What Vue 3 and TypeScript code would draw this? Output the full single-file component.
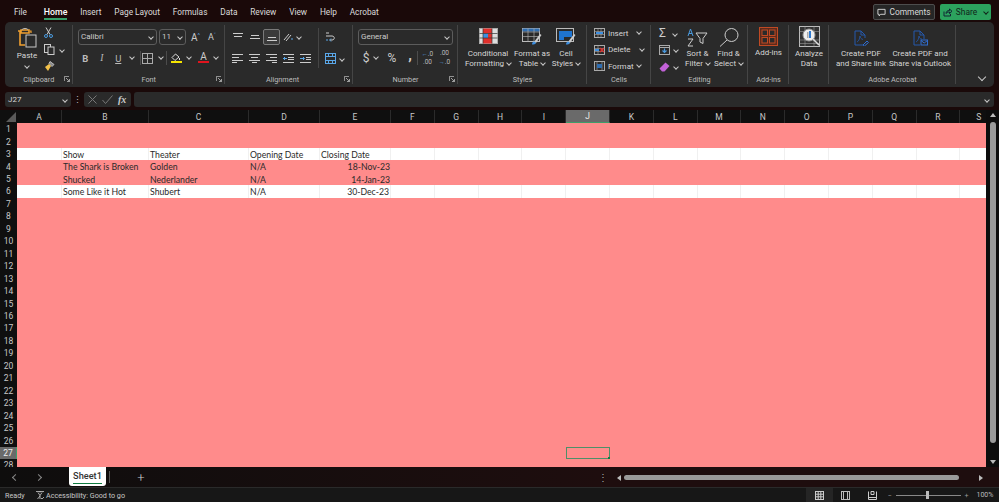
<script setup lang="ts">
const tabs = ['File', 'Home', 'Insert', 'Page Layout', 'Formulas', 'Data', 'Review', 'View', 'Help', 'Acrobat']
const columns: { n: string; w: number }[] = [
  { n: 'A', w: 45 }, { n: 'B', w: 87 }, { n: 'C', w: 100 }, { n: 'D', w: 71 }, { n: 'E', w: 71 },
  ...'FGHIJKLMNOPQR'.split('').map((n) => ({ n, w: 43.8 })),
  { n: 'S', w: 37.6 },
]
const rowNums = Array.from({ length: 28 }, (_, i) => i + 1)
const content: Record<number, string[]> = {
  3: ['', 'Show', 'Theater', 'Opening Date', 'Closing Date'],
  4: ['', 'The Shark is Broken', 'Golden', 'N/A', '18-Nov-23'],
  5: ['', 'Shucked', 'Nederlander', 'N/A', '14-Jan-23'],
  6: ['', 'Some Like it Hot', 'Shubert', 'N/A', '30-Dec-23'],
}
function cellText(r: number, c: number): string {
  return content[r]?.[c] ?? ''
}
</script>

<template>
  <div class="app">
    <div class="titlebar">
      <nav class="tabs">
        <span v-for="t in tabs" :key="t" class="tab" :class="{ on: t === 'Home' }">{{ t }}</span>
      </nav>
      <div class="actions">
        <button class="comments">
          <svg width="9" height="9" viewBox="0 0 10 10" fill="none" stroke="#ddd"><path d="M1 1.500h8v5.500H4L2.400 8.800V7H1z"/></svg>
          Comments
        </button>
        <button class="share">
          <svg width="10" height="10" viewBox="0 0 10 10" fill="none" stroke="#123"><path d="M1 4.500v4.500h6.500V7M3 6.500c0-2 1.500-3 3.500-3V2L9 4.300 6.500 6.500V5C5 5 4 5.500 3 6.500z"/></svg>
          Share
          <i class="chev dark"></i>
        </button>
      </div>
    </div>

    <section class="ribbon">
      <!-- Clipboard -->
      <div class="group clip">
        <div class="body clip-body">
          <div class="big paste">
            <svg width="20" height="21" viewBox="0 0 20 21" fill="none">
              <path d="M4 3h8v3H4z M1 4h2v14h5" stroke="#f0a030" stroke-width="1.600"/>
              <path d="M13 4h1v2" stroke="#f0a030" stroke-width="1.200"/>
              <path d="M5 3c0-2 6-2 6 0" stroke="#bbb"/>
              <rect x="9" y="8" width="10" height="12" stroke="#c8c8c8" fill="#2a2a2a"/>
            </svg>
            <span class="btxt pastetxt">Paste</span>
            <i class="chev"></i>
          </div>
          <div class="clip-tools">
            <svg width="9" height="11" viewBox="0 0 9 11" fill="none" stroke="#ccc"><path d="M2 .5l4 7M7 .5l-4 7"/><circle cx="2" cy="9" r="1.500" stroke="#4a9be0"/><circle cx="7" cy="9" r="1.500" stroke="#4a9be0"/></svg>
            <span class="tool-line">
              <svg width="11" height="11" viewBox="0 0 11 11" fill="none" stroke="#ccc"><rect x=".5" y=".5" width="6" height="8"/><rect x="4" y="3" width="6" height="7.500" fill="#2a2a2a"/></svg>
              <i class="chev"></i>
            </span>
            <svg width="11" height="11" viewBox="0 0 11 11" fill="none"><path d="M6 .5l4 3-2 2-3-3z" fill="#888" stroke="#bbb"/><path d="M5 3L1 6l3 4 3-5z" fill="#f2c14a"/></svg>
          </div>
        </div>
        <div class="label"><span>Clipboard</span><svg class="launch" width="6" height="6" viewBox="0 0 6 6" fill="none" stroke="#bbb" stroke-width=".8"><path d="M.4 5V.4H5M2 2l3.500 3.500M5.500 3v2.500H3"/></svg></div>
      </div>

      <!-- Font -->
      <div class="group font">
        <div class="body font-body">
          <div class="row1">
            <div class="select w-font"><span>Calibri</span><i class="chev"></i></div>
            <div class="select w-size"><span>11</span><i class="chev"></i></div>
            <span class="grow-a">A<sup>^</sup></span>
            <span class="shrink-a">A<sup>˅</sup></span>
          </div>
          <div class="row2">
            <b class="fmt">B</b><i class="fmt it">I</i><u class="fmt">U</u><i class="chev sp-u"></i>
            <span class="vsep"></span>
            <svg class="ic-border" width="11" height="11" viewBox="0 0 11 11" fill="none" stroke="#aaa"><rect x=".5" y=".5" width="10" height="10"/><path d="M5.500 .5v10M.5 5.500h10"/></svg><i class="chev sp-b"></i>
            <span class="vsep"></span>
            <span class="colorbtn fillbtn">
              <svg width="10" height="8" viewBox="0 0 10 8" fill="none" stroke="#ddd"><path d="M4.500 1L1 4.500l3 3 4-3.500zM8.500 5v2"/></svg>
              <em class="yellow"></em>
            </span><i class="chev sp-c"></i>
            <span class="colorbtn fontbtn"><span class="a">A</span><em class="red"></em></span><i class="chev sp-c"></i>
          </div>
        </div>
        <div class="label"><span>Font</span><svg class="launch" width="6" height="6" viewBox="0 0 6 6" fill="none" stroke="#bbb" stroke-width=".8"><path d="M.4 5V.4H5M2 2l3.500 3.500M5.500 3v2.500H3"/></svg></div>
      </div>

      <!-- Alignment -->
      <div class="group align">
        <div class="body align-body">
          <div class="align-grid">
            <div class="al-row top">
              <span class="al"><svg width="10" height="8" viewBox="0 0 10 8" stroke="#ccc"><path d="M0 .5h10M1 3.500h8"/></svg></span>
              <span class="al"><svg width="10" height="8" viewBox="0 0 10 8" stroke="#ccc"><path d="M1 2.500h8M0 5.500h10"/></svg></span>
              <span class="al active"><svg width="10" height="8" viewBox="0 0 10 8" stroke="#ccc"><path d="M1 4.500h8M0 7.500h10"/></svg></span>
              <span class="al orient"><svg width="11" height="9" viewBox="0 0 11 9" fill="none" stroke="#ccc"><path d="M1 7l5-6M3 8l5-6"/><path d="M8 6h2" stroke="#5aa7e8"/></svg><i class="chev"></i></span>
            </div>
            <div class="al-row">
              <span class="al" v-for="k in 3" :key="k" :class="'just' + k">
                <svg width="11" height="9" viewBox="0 0 11 9" stroke="#ccc"><path v-if="k === 1" d="M0 .5h11M0 3.500h7M0 6.500h11M0 8.500h5"/><path v-else-if="k === 2" d="M0 .5h11M2 3.500h7M0 6.500h11M3 8.500h5"/><path v-else d="M0 .5h11M4 3.500h7M0 6.500h11M6 8.500h5"/></svg>
              </span>
              <span class="al"><svg width="11" height="9" viewBox="0 0 11 9" fill="none" stroke="#ccc"><path d="M0 .5h11M5 3.500h6M5 5.500h6M0 8.500h11"/><path d="M4 4.500H0M2 3L.5 4.500 2 6" stroke="#5aa7e8"/></svg></span>
              <span class="al"><svg width="11" height="9" viewBox="0 0 11 9" fill="none" stroke="#ccc"><path d="M0 .5h11M6 3.500h5M6 5.500h5M0 8.500h11"/><path d="M0 4.500h4M3 3l1.500 1.500L3 6" stroke="#5aa7e8"/></svg></span>
            </div>
          </div>
          <span class="inner-sep"></span>
          <div class="wrap-col">
            <svg width="11" height="11" viewBox="0 0 11 11" fill="none" stroke="#ccc"><path d="M1 1h3M1 4h6c3 0 3 4 0 4H5" /><path d="M6 6.500L4.500 8 6 9.500M1 8h2" stroke="#5aa7e8"/></svg>
            <span class="merge"><svg width="11" height="11" viewBox="0 0 11 11" fill="none" stroke="#5aa7e8"><rect x=".5" y=".5" width="10" height="10"/><path d="M.5 3.500h10M.5 7.500h10M3.500 .5v3M7.500 .5v3M3.500 7.500v3M7.500 7.500v3"/></svg><i class="chev"></i></span>
          </div>
        </div>
        <div class="label align-label"><span>Alignment</span><svg class="launch" width="6" height="6" viewBox="0 0 6 6" fill="none" stroke="#bbb" stroke-width=".8"><path d="M.4 5V.4H5M2 2l3.500 3.500M5.500 3v2.500H3"/></svg></div>
      </div>

      <!-- Number -->
      <div class="group number">
        <div class="body number-body">
          <div class="select w-general"><span>General</span><i class="chev"></i></div>
          <div class="num-row">
            <span class="sym dollar">$</span><i class="chev"></i>
            <span class="sym pct">%</span>
            <b class="sym comma">,</b>
            <span class="vsep"></span>
            <span class="dec"><em><small>←</small>.0</em><em>.00</em></span>
            <span class="dec"><em>.00</em><em><small>→</small>.0</em></span>
          </div>
        </div>
        <div class="label"><span>Number</span><svg class="launch" width="6" height="6" viewBox="0 0 6 6" fill="none" stroke="#bbb" stroke-width=".8"><path d="M.4 5V.4H5M2 2l3.500 3.500M5.500 3v2.500H3"/></svg></div>
      </div>

      <!-- Styles -->
      <div class="group styles">
        <div class="body styles-body">
          <div class="big b-cf">
            <svg width="19" height="16" viewBox="0 0 19 16" fill="none">
              <rect x=".5" y=".5" width="18" height="15" fill="#ddd" stroke="#aaa"/>
              <path d="M4 .5h9v5H4zM4 10h9v5.500H4z" fill="#e0302c"/>
              <path d="M4 5.500h5V10H4z" fill="#3d8fe0"/>
              <path d="M9 5.500h4V10H9z" fill="#e0302c"/>
              <path d="M13 .5v15M4 .5v15M.5 5.500h18M.5 10h18" stroke="#333" stroke-width=".7"/>
            </svg>
            <span class="btxt">Conditional</span>
            <span class="btxt">Formatting <i class="chev inl"></i></span>
          </div>
          <div class="big b-ft">
            <svg width="20" height="17" viewBox="0 0 20 17" fill="none">
              <rect x=".5" y=".5" width="17" height="13" fill="#2a2a2a" stroke="#bbb"/>
              <path d="M.5 .5h17v3H.5z" fill="#2f6db0"/>
              <path d="M6 .5v13M12 .5v13M.5 4h17M.5 8.500h17" stroke="#aaa" stroke-width=".7"/>
              <path d="M12 14l6-8 1.500 1-5.500 8z" fill="#ccc"/>
              <path d="M10 16.500c0-2 1-3 2.500-3l1.500 1.500c-.5 1.500-2 1.500-4 1.500z" fill="#3d8fe0"/>
            </svg>
            <span class="btxt">Format as</span>
            <span class="btxt">Table <i class="chev inl"></i></span>
          </div>
          <div class="big b-cs">
            <svg width="20" height="17" viewBox="0 0 20 17" fill="none">
              <rect x=".5" y=".5" width="17" height="13" fill="#2a2a2a" stroke="#bbb"/>
              <path d="M3 3h13v6H8v3H3z" fill="#1f74d0"/>
              <path d="M12 14l6-8 1.500 1-5.500 8z" fill="#ccc"/>
              <path d="M10 16.500c0-2 1-3 2.500-3l1.500 1.500c-.5 1.500-2 1.500-4 1.500z" fill="#3d8fe0"/>
            </svg>
            <span class="btxt">Cell</span>
            <span class="btxt">Styles <i class="chev inl"></i></span>
          </div>
        </div>
        <div class="label"><span>Styles</span></div>
      </div>

      <!-- Cells -->
      <div class="group cells">
        <div class="body cells-body">
          <div class="cell-item">
            <svg width="11" height="10" viewBox="0 0 11 10" fill="none" stroke="#aaa"><rect x=".5" y=".5" width="10" height="9"/><path d="M4 .5v9M7 .5v9M.5 3.500h10M.5 6.500h10" stroke-width=".6"/><path d="M2 5h7" stroke="#3d8fe0" stroke-width="2"/></svg>
            <span>Insert</span><i class="chev c1"></i>
          </div>
          <div class="cell-item">
            <svg width="11" height="10" viewBox="0 0 11 10" fill="none" stroke="#aaa"><rect x=".5" y=".5" width="10" height="9"/><path d="M4 .5v9M.5 3.500h10M.5 6.500h10" stroke-width=".6"/><path d="M6 3l4 4M10 3L6 7" stroke="#e0302c" stroke-width="1.200"/><path d="M1 5h4" stroke="#3d8fe0" stroke-width="2"/></svg>
            <span>Delete</span><i class="chev c2"></i>
          </div>
          <div class="cell-item">
            <svg width="11" height="10" viewBox="0 0 11 10" fill="none" stroke="#aaa"><rect x=".5" y=".5" width="10" height="9"/><path d="M3 .5v9M8 .5v9" stroke-width=".6"/><path d="M3 3h5v4H3z" fill="#2f6db0" stroke="none"/></svg>
            <span>Format</span><i class="chev c1"></i>
          </div>
        </div>
        <div class="label"><span>Cells</span></div>
      </div>

      <!-- Editing -->
      <div class="group editing">
        <div class="body editing-body">
          <div class="edit-tools">
            <span class="et"><span class="sigma">Σ</span><i class="chev"></i></span>
            <span class="et"><svg width="11" height="10" viewBox="0 0 11 10" fill="none" stroke="#aaa"><rect x=".5" y=".5" width="10" height="9"/><path d="M.5 2.500h10"/><path d="M5.500 3.500v4M3.500 5.500l2 2 2-2" stroke="#4a9be0" stroke-width="1.200"/></svg><i class="chev"></i></span>
            <span class="et"><svg width="11" height="10" viewBox="0 0 11 10" fill="#c262d8"><path d="M6.500 .5l4 3.500-5 5.500H3L.5 6.500z"/></svg><i class="chev"></i></span>
          </div>
          <div class="big b-sort">
            <svg width="21" height="19" viewBox="0 0 21 19" fill="none" stroke="#ccc">
              <path d="M1 8L3.500 1 6 8M2 5.500h3" stroke="#4a9be0"/>
              <path d="M1 11h5l-5 7h5"/>
              <path d="M9 5h11l-4 5.500v5l-3-1.500v-3.500z"/>
            </svg>
            <span class="btxt">Sort &amp;</span>
            <span class="btxt">Filter <i class="chev inl"></i></span>
          </div>
          <div class="big b-find">
            <svg width="20" height="19" viewBox="0 0 20 19" fill="none" stroke="#ccc">
              <circle cx="12.500" cy="7" r="6.500"/>
              <path d="M8 12l-7 6.500"/>
            </svg>
            <span class="btxt">Find &amp;</span>
            <span class="btxt">Select <i class="chev inl"></i></span>
          </div>
        </div>
        <div class="label"><span>Editing</span></div>
      </div>

      <!-- Add-ins -->
      <div class="group addins">
        <div class="body center-body">
          <div class="big">
            <svg width="19" height="19" viewBox="0 0 19 19" fill="none" stroke="#c04a24" stroke-width="1">
              <rect x=".5" y=".5" width="18" height="18" fill="#5a2a1c" />
              <rect x="3" y="3" width="5.500" height="5.500" fill="#2a2a2a"/>
              <rect x="10.500" y="3" width="5.500" height="5.500" fill="#2a2a2a"/>
              <rect x="3" y="10.500" width="5.500" height="5.500" fill="#2a2a2a"/>
              <rect x="10.500" y="10.500" width="5.500" height="5.500" fill="#2a2a2a"/>
            </svg>
            <span class="btxt">Add-ins</span>
          </div>
        </div>
        <div class="label"><span>Add-ins</span></div>
      </div>

      <!-- Analyze -->
      <div class="group analyze">
        <div class="body center-body">
          <div class="big b-an">
            <svg width="21" height="21" viewBox="0 0 21 21" fill="none">
              <rect x=".5" y=".5" width="20" height="20" fill="#333" stroke="#bbb"/>
              <path d="M.5 5.500h20M.5 14h20M.5 17.500h20M6 .5v20M15 .5v20" stroke="#999" stroke-width=".6"/>
              <circle cx="10" cy="9" r="6" fill="#eee" stroke="#999"/>
              <path d="M8 6h1.500v6H8z" fill="#aaa"/><path d="M10 5h2v7h-2z" fill="#2f7ad0"/>
              <path d="M14 13l6 6" stroke="#ddd" stroke-width="1.500"/>
            </svg>
            <span class="btxt">Analyze</span>
            <span class="btxt">Data</span>
          </div>
        </div>
        <div class="label"></div>
      </div>

      <!-- Acrobat -->
      <div class="group acrobat">
        <div class="body acro-body">
          <div class="big b-pdf1">
            <svg width="15" height="16" viewBox="0 0 15 16" fill="none" stroke="#2458ac">
              <path d="M9 15H1V1h6l4 4v3"/><path d="M7 1v4h4"/>
              <path d="M3 12c2-1 2.500-3 3-6 .5 2 1 3 3 3.500" stroke-width=".8"/>
              <path d="M9 15l4-4 1.500 1.500-4 3.500z" stroke="#2f6cd0"/>
            </svg>
            <span class="btxt">Create PDF</span>
            <span class="btxt">and Share link</span>
          </div>
          <div class="big b-pdf2">
            <svg width="15" height="16" viewBox="0 0 15 16" fill="none" stroke="#2458ac">
              <path d="M7 15H1V1h6l4 4v4"/><path d="M7 1v4h4"/>
              <path d="M3 12c2-1 2.500-3 3-6 .5 2 1 3 3 3" stroke-width=".8"/>
              <rect x="8" y="10" width="6.500" height="5" stroke="#2f6cd0"/><path d="M8 10.500l3.200 2.500 3.300-2.500" stroke="#2f6cd0"/>
            </svg>
            <span class="btxt">Create PDF and</span>
            <span class="btxt">Share via Outlook</span>
          </div>
        </div>
        <div class="label"><span>Adobe Acrobat</span></div>
      </div>

      <div class="collapse"><i class="chev big-chev"></i></div>
    </section>

    <div class="formula">
      <div class="namebox"><span>J27</span><i class="chev"></i></div>
      <span class="dots">⋮</span>
      <div class="fbtns">
        <svg width="9" height="9" viewBox="0 0 9 9" stroke="#777" fill="none"><path d="M.5 .5l8 8M8.500 .5l-8 8"/></svg>
        <svg width="11" height="9" viewBox="0 0 11 9" stroke="#777" fill="none"><path d="M.5 5l3 3.500 7-8"/></svg>
        <span class="fx">fx</span>
      </div>
      <div class="finput"><i class="chev"></i></div>
    </div>

    <div class="sheet">
      <div class="sheet-main">
        <div class="col-heads">
          <div class="corner"><span class="tri"></span></div>
          <div v-for="c in columns" :key="c.n" class="ch" :class="{ sel: c.n === 'J' }" :style="{ width: c.w + 'px' }">{{ c.n }}</div>
        </div>
        <div class="grid-wrap">
          <div v-for="r in rowNums" :key="r" class="row" :class="{ white: r === 3 || r === 6 }">
            <div class="rh" :class="{ sel: r === 27 }">{{ r }}</div>
            <div
              v-for="(c, ci) in columns"
              :key="c.n"
              class="cell"
              :class="{ right: r > 3 && ci === 4, active: r === 27 && c.n === 'J' }"
              :style="{ width: c.w + 'px' }"
            >{{ cellText(r, ci) }}</div>
          </div>
        </div>
      </div>
      <div class="vscroll">
        <span class="up"></span>
        <span class="vthumb"></span>
        <span class="down"></span>
      </div>
    </div>

    <div class="sheetbar">
      <span class="nav"><i class="chev left"></i><i class="chev rightc"></i></span>
      <div class="sheettab"><span>Sheet1</span></div>
      <span class="tabsep"></span>
      <span class="plus">+</span>
      <span class="bar-dots">⋮</span>
      <div class="hscroll">
        <span class="la"></span>
        <span class="hthumb"></span>
        <span class="ra"></span>
      </div>
    </div>

    <footer class="status">
      <span class="ready">Ready</span>
      <svg class="acc" width="10" height="10" viewBox="0 0 10 10" fill="none" stroke="#ccc" stroke-width=".8"><path d="M1 1.500h8M5 1v1.500M3 2.500l2 3 2-3M5 5.500V9M2.500 9L5 6"/><path d="M6 8l1 1 2-2"/></svg>
      <span class="acc-txt">Accessibility: Good to go</span>
      <div class="views">
        <span class="vw on"><svg width="9" height="9" viewBox="0 0 9 9" fill="none" stroke="#ccc"><rect x=".5" y=".5" width="8" height="8"/><path d="M3.200 .5v8M5.800 .5v8M.5 3.200h8M.5 5.800h8"/></svg></span>
        <span class="vw"><svg width="9" height="9" viewBox="0 0 9 9" fill="none" stroke="#bbb"><rect x=".5" y=".5" width="8" height="8"/><rect x="2.500" y=".5" width="4" height="8"/></svg></span>
        <span class="vw"><svg width="9" height="9" viewBox="0 0 9 9" fill="none" stroke="#ccc"><path d="M.5 .5v8h8v-8M.5 6.500h8M3 .5h3v3H3z"/></svg></span>
      </div>
      <div class="zoom">
        <span class="z">−</span>
        <span class="slider"><em></em></span>
        <span class="z">+</span>
        <span class="pct100">100%</span>
      </div>
    </footer>
  </div>
</template>

<style scoped>
.app {
  width: 999px;
  height: 502px;
  overflow: hidden;
  background: #1a0909;
  font-family: Roboto, "Noto Sans", sans-serif;
  color: #d6d6d6;
  display: flex;
  flex-direction: column;
}
.titlebar { height: 22px; display: flex; align-items: center; justify-content: space-between; padding: 0 8px 0 14px; flex: none; }
.tabs { display: flex; gap: 12.800px; font-size: 8.300px; padding-top: 3px; }
.tab { color: #dcdcdc; position: relative; padding-bottom: 2px; }
.tab.on { color: #fff; font-weight: 500; margin-left: 4px; font-size: 8.800px; line-height: 10px; }
.tab.on::after { content: ""; position: absolute; left: 0; right: 0; bottom: -1px; height: 1.500px; background: #35a26a; }
.actions { display: flex; gap: 5px; margin-top: 2px; }
.comments, .share { font: inherit; font-size: 8.400px; height: 16px; border-radius: 2px; display: flex; align-items: center; gap: 3px; padding: 0; justify-content: center; }
.comments { width: 62px; background: #262626; color: #d8d8d8; border: 1px solid #4d4d4d; }
.share { width: 51px; background: #2ca25e; color: #10241a; border: none; }

.chev { display: inline-block; width: 3px; height: 3px; border-right: 1px solid #c8c8c8; border-bottom: 1px solid #c8c8c8; transform: rotate(45deg); flex: none; }
.chev.dark { border-color: #10241a; margin-left: 4px; }
.chev.inl { margin: 0 0 2px 1px; vertical-align: middle; }

.ribbon { height: 65px; margin: 0 5px; width: 989px; background: #2a2a2a; border-radius: 5px; display: flex; position: relative; flex: none; }
.group { position: relative; display: flex; flex-direction: column; flex: none; }
.group::after { content: ""; position: absolute; right: 0; top: 3px; bottom: 3px; width: 1px; background: #454545; }
.body { height: 50px; flex: none; display: flex; box-sizing: border-box; }
.label { flex: 1; display: flex; align-items: center; justify-content: center; font-size: 7.300px; color: #bdbdbd; position: relative; padding-bottom: 1px; }
.launch { position: absolute; right: 3px; top: 4px; }
.big { display: flex; flex-direction: column; align-items: center; flex: none; }
.btxt { font-size: 8px; line-height: 10.300px; color: #d6d6d6; white-space: nowrap; }
.big svg { margin-bottom: 2px; }

.clip { width: 67.500px; }
.clip-body { padding: 5px 0 0 12px; }
.paste { width: 20px; }
.pastetxt { margin-top: 1px; }
.paste .chev { margin-top: 3px; }
.clip-tools { display: flex; flex-direction: column; gap: 6px; margin: 0 0 0 7px; padding-top: 0; }
.tool-line { display: flex; align-items: center; gap: 5px; }

.font { width: 152.500px; }
.font-body { flex-direction: column; padding: 7px 0 0 5.500px; }
.row1 { display: flex; align-items: center; height: 16px; }
.select { border: 1px solid #5c5c5c; border-radius: 3px; display: flex; align-items: center; justify-content: space-between; height: 16px; padding: 0 3px 1px 2px; font-size: 8px; box-sizing: border-box; color: #ccc; }
.w-font { width: 79px; margin-right: 2px; }
.w-size { width: 27px; }
.grow-a, .shrink-a { font-size: 10px; color: #ccc; display: inline-flex; }
.grow-a { margin-left: 5px; }
.shrink-a { margin-left: 8px; font-size: 9px; }
.grow-a sup, .shrink-a sup { font-size: 6px; color: #5aa7e8; line-height: 1; }
.row2 { display: flex; align-items: center; height: 18px; margin-top: 4px; margin-left: -1px; }
.fmt { width: 16.500px; font-size: 9.500px; color: #bbb; font-style: normal; text-align: center; font-family: "Liberation Serif", serif; flex: none; }
.fmt.it { font-style: italic; }
b.fmt, u.fmt { font-family: Roboto, sans-serif; }
.sp-u { margin: 0 6px 2px 3px; }
.vsep { width: 1px; height: 14px; background: #4c4c4c; flex: none; }
.ic-border { margin-left: 1px; }
.sp-b { margin: 0 3px 2px 6px; }
.sp-c { margin: 0 3px 2px 5px; }
.colorbtn { display: inline-flex; flex-direction: column; align-items: center; width: 11px; flex: none; }
.fillbtn { margin-left: 4px; }
.fontbtn { margin-left: 4.500px; }
.colorbtn em { display: block; width: 11px; height: 2px; }
.yellow { background: #f5e400; }
.red { background: #e0141e; }
.a { font-size: 10px; line-height: 8.500px; color: #ccc; }

.align { width: 128px; }
.align-body { padding: 7px 0 0 4px; }
.align-grid { display: flex; flex-direction: column; gap: 5px; }
.al-row { display: flex; height: 16px; align-items: center; }
.al { width: 17px; height: 16px; display: inline-flex; align-items: center; justify-content: center; box-sizing: border-box; flex: none; }
.al.active { border: 1px solid #7a7a7a; border-radius: 2px; background: #3a3a3a; }
.al.orient { width: 24px; gap: 3px; }
.inner-sep { width: 1px; height: 40px; background: #454545; margin: -1px 0 0 3.500px; }
.wrap-col { display: flex; flex-direction: column; gap: 10px; padding: 3px 0 0 6px; }
.merge { display: flex; align-items: center; gap: 4px; }
.align-label { padding-right: 13px; }

.number { width: 105px; }
.number-body { flex-direction: column; padding: 7px 0 0 5px; }
.w-general { width: 95px; }
.num-row { display: flex; align-items: center; height: 18px; margin-top: 4px; padding-left: 4px; }
.sym { font-size: 12px; color: #ccc; text-align: center; flex: none; }
.dollar { width: 8px; }
.num-row .chev { margin: 0 0 2px 4px; }
.pct { width: 14px; margin-left: 7px; }
.comma { width: 10px; margin: -6px 0 0 6px; font-size: 15px; }
.num-row .vsep { margin: 0 0 0 2px; }
.dec { display: flex; flex-direction: column; width: 15px; margin-left: 2px; font-size: 6.500px; line-height: 7.500px; text-align: center; flex: none; white-space: nowrap; }
.dec em { font-style: normal; color: #bbb; }
.dec small { font-size: 6px; color: #5aa7e8; }

.styles { width: 129px; }
.styles-body { padding-top: 6px; }
.b-cf { width: 60px; }
.b-cf svg { margin-bottom: 5px; }
.b-ft { width: 28px; }
.b-ft svg, .b-cs svg { margin-bottom: 4px; }
.b-cs { width: 40px; }

.cells { width: 64px; }
.cells-body { flex-direction: column; padding: 5.500px 0 0 7px; gap: 5.500px; }
.cell-item { display: flex; align-items: center; height: 11px; font-size: 8px; gap: 3px; position: relative; }
.c1 { position: absolute; left: 42.500px; top: 2.500px; }
.c2 { position: absolute; left: 45.500px; top: 2.500px; }

.editing { width: 97px; }
.editing-body { padding-top: 6px; }
.edit-tools { display: flex; flex-direction: column; width: 33px; gap: 5.500px; padding-left: 8px; box-sizing: border-box; }
.et { display: flex; align-items: center; gap: 4px; height: 11px; }
.sigma { font-size: 12px; color: #ccc; line-height: 11px; width: 10px; }
.b-sort { width: 31px; margin-left: -2px; }
.b-find { width: 31px; }

.addins { width: 41px; }
.center-body { justify-content: center; padding-top: 5px; }
.analyze { width: 40px; }
.b-an svg { margin-top: -1px; }

.acrobat { width: 127px; }
.acro-body { padding-top: 8px; }
.b-pdf1 { width: 64px; }
.b-pdf2 { width: 54px; }
.b-pdf1 svg, .b-pdf2 svg { margin-bottom: 3px; }
.collapse { flex: 1; display: flex; align-items: flex-end; justify-content: flex-end; padding: 0 9px 7px 0; }
.big-chev { width: 5px; height: 5px; }

.formula { flex: none; height: 15px; margin: 5px 5px 0; display: flex; align-items: center; width: 989px; }
.namebox { width: 66px; height: 15px; background: #2a2a2a; border-radius: 3px; display: flex; align-items: center; justify-content: space-between; padding: 0 4px 0 3px; box-sizing: border-box; font-size: 8px; }
.dots { width: 13px; text-align: center; color: #bbb; font-size: 9px; }
.fbtns { width: 47px; height: 15px; background: #2a2a2a; border-radius: 3px; display: flex; align-items: center; gap: 5px; padding-left: 4px; box-sizing: border-box; }
.fx { font-family: "Liberation Serif", serif; font-style: italic; font-size: 10px; font-weight: 700; color: #ccc; }
.finput { margin-left: 3px; flex: 1; height: 15px; background: #2a2a2a; border-radius: 3px; display: flex; align-items: center; justify-content: flex-end; padding-right: 5px; }

.sheet { flex: none; height: 357px; margin-top: 3px; display: flex; background: #0f0f0f; overflow: hidden; }
.sheet-main { width: 986px; display: flex; flex-direction: column; flex: none; }
.col-heads { height: 13px; display: flex; flex: none; background: #0f0f0f; color: #c8c8c8; font-size: 8.500px; }
.corner { width: 17px; position: relative; flex: none; }
.tri { position: absolute; right: 1px; bottom: 1px; width: 0; height: 0; border-left: 10px solid transparent; border-bottom: 10px solid #5a5a5a; }
.ch { flex: none; display: flex; align-items: center; justify-content: center; box-sizing: border-box; border-right: 1px solid #2b2b2b; }
.ch.sel { background: #6a6a6a; border-bottom: 1px solid #3f9d6a; color: #e8e8e8; }
.grid-wrap { flex: 1; overflow: hidden; background: #ff8b8b; }
.row { height: 12.460px; display: flex; background: #ff8b8b; }
.row.white { background: #fff; }
.rh { width: 17px; flex: none; background: #0f0f0f; color: #c8c8c8; font-size: 8.500px; line-height: 12px; display: flex; align-items: center; justify-content: center; box-sizing: border-box; }
.rh.sel { background: #6a6a6a; color: #eee; border-right: 1px solid #3f9d6a; }
.cell { flex: none; box-sizing: border-box; padding: 1px 1px 0 1px; font-family: Lato, "Liberation Sans", sans-serif; font-size: 8.700px; line-height: 11.460px; color: #2a2a2a; white-space: nowrap; }
.row.white .cell { border-right: 1px solid #f0f0f0; }
.cell.right { text-align: right; }
.cell.active { outline: 1px solid #4e8f68; outline-offset: -1px; position: relative; }
.cell.active::after { content: ""; position: absolute; right: 0; bottom: 0; width: 2px; height: 2px; background: #107c41; }

.vscroll { width: 13px; flex: none; position: relative; background: #0d0d0d; }
.up, .down { position: absolute; left: 4px; width: 0; height: 0; border-left: 3px solid transparent; border-right: 3px solid transparent; }
.up { top: 3px; border-bottom: 4px solid #bbb; }
.down { bottom: 3px; border-top: 4px solid #bbb; }
.vthumb { position: absolute; left: 4px; top: 12px; width: 6px; height: 321px; background: #9a9a9a; border-radius: 3px; }

.sheetbar { flex: none; height: 20px; display: flex; align-items: center; position: relative; background: linear-gradient(90deg, #0e0d0d, #1e0d0e 60%); }
.nav { width: 69px; display: flex; gap: 18px; padding-left: 13px; box-sizing: border-box; flex: none; }
.left { transform: rotate(135deg); border-color: #888; width: 4px; height: 4px; }
.rightc { transform: rotate(-45deg); border-color: #888; width: 4px; height: 4px; }
.sheettab { width: 37px; height: 19px; background: #fff; border-radius: 0 0 3px 3px; align-self: flex-start; display: flex; justify-content: center; flex: none; }
.sheettab span { font-size: 9.200px; font-weight: 500; color: #333; height: 14px; line-height: 13px; border-bottom: 1.500px solid #107c41; margin-top: 2px; }
.tabsep { width: 1px; height: 12px; background: #555; margin-left: 3px; }
.plus { margin-left: 26px; font-size: 13px; font-weight: 300; color: #ccc; width: 10px; text-align: center; }
.bar-dots { margin-left: 452px; width: 10px; text-align: center; font-size: 10px; color: #aaa; }
.hscroll { margin-left: 6px; flex: 1; height: 11px; position: relative; margin-right: 13px; }
.la, .ra { position: absolute; top: 3px; width: 0; height: 0; border-top: 3px solid transparent; border-bottom: 3px solid transparent; }
.la { left: 3px; border-right: 4px solid #bbb; }
.ra { right: 3px; border-left: 4px solid #bbb; }
.hthumb { position: absolute; left: 10px; top: 3px; height: 5.500px; width: 335px; background: #9a9a9a; border-radius: 3px; }

.status { flex: none; height: 15px; background: #171717; display: flex; align-items: center; font-size: 7.200px; color: #c8c8c8; padding-left: 5px; border-top: 1px solid #2a2a2a; box-sizing: border-box; }
.ready { width: 30px; }
.acc-txt { margin-left: 1px; width: 706px; flex: none; white-space: nowrap; }
.views { display: flex; margin-left: 54px; }
.vw { width: 26.500px; height: 14px; display: flex; align-items: center; justify-content: center; flex: none; }
.vw.on { background: #252525; }
.zoom { display: flex; align-items: center; margin-left: 1px; }
.z { width: 6px; text-align: center; color: #999; }
.slider { width: 65px; height: 1px; background: #888; position: relative; margin: 0 3px; }
.slider em { position: absolute; left: 30px; top: -3.500px; width: 3px; height: 8px; background: #bbb; }
.pct100 { margin-left: 7px; color: #bbb; font-size: 7px; white-space: nowrap; }
</style>
